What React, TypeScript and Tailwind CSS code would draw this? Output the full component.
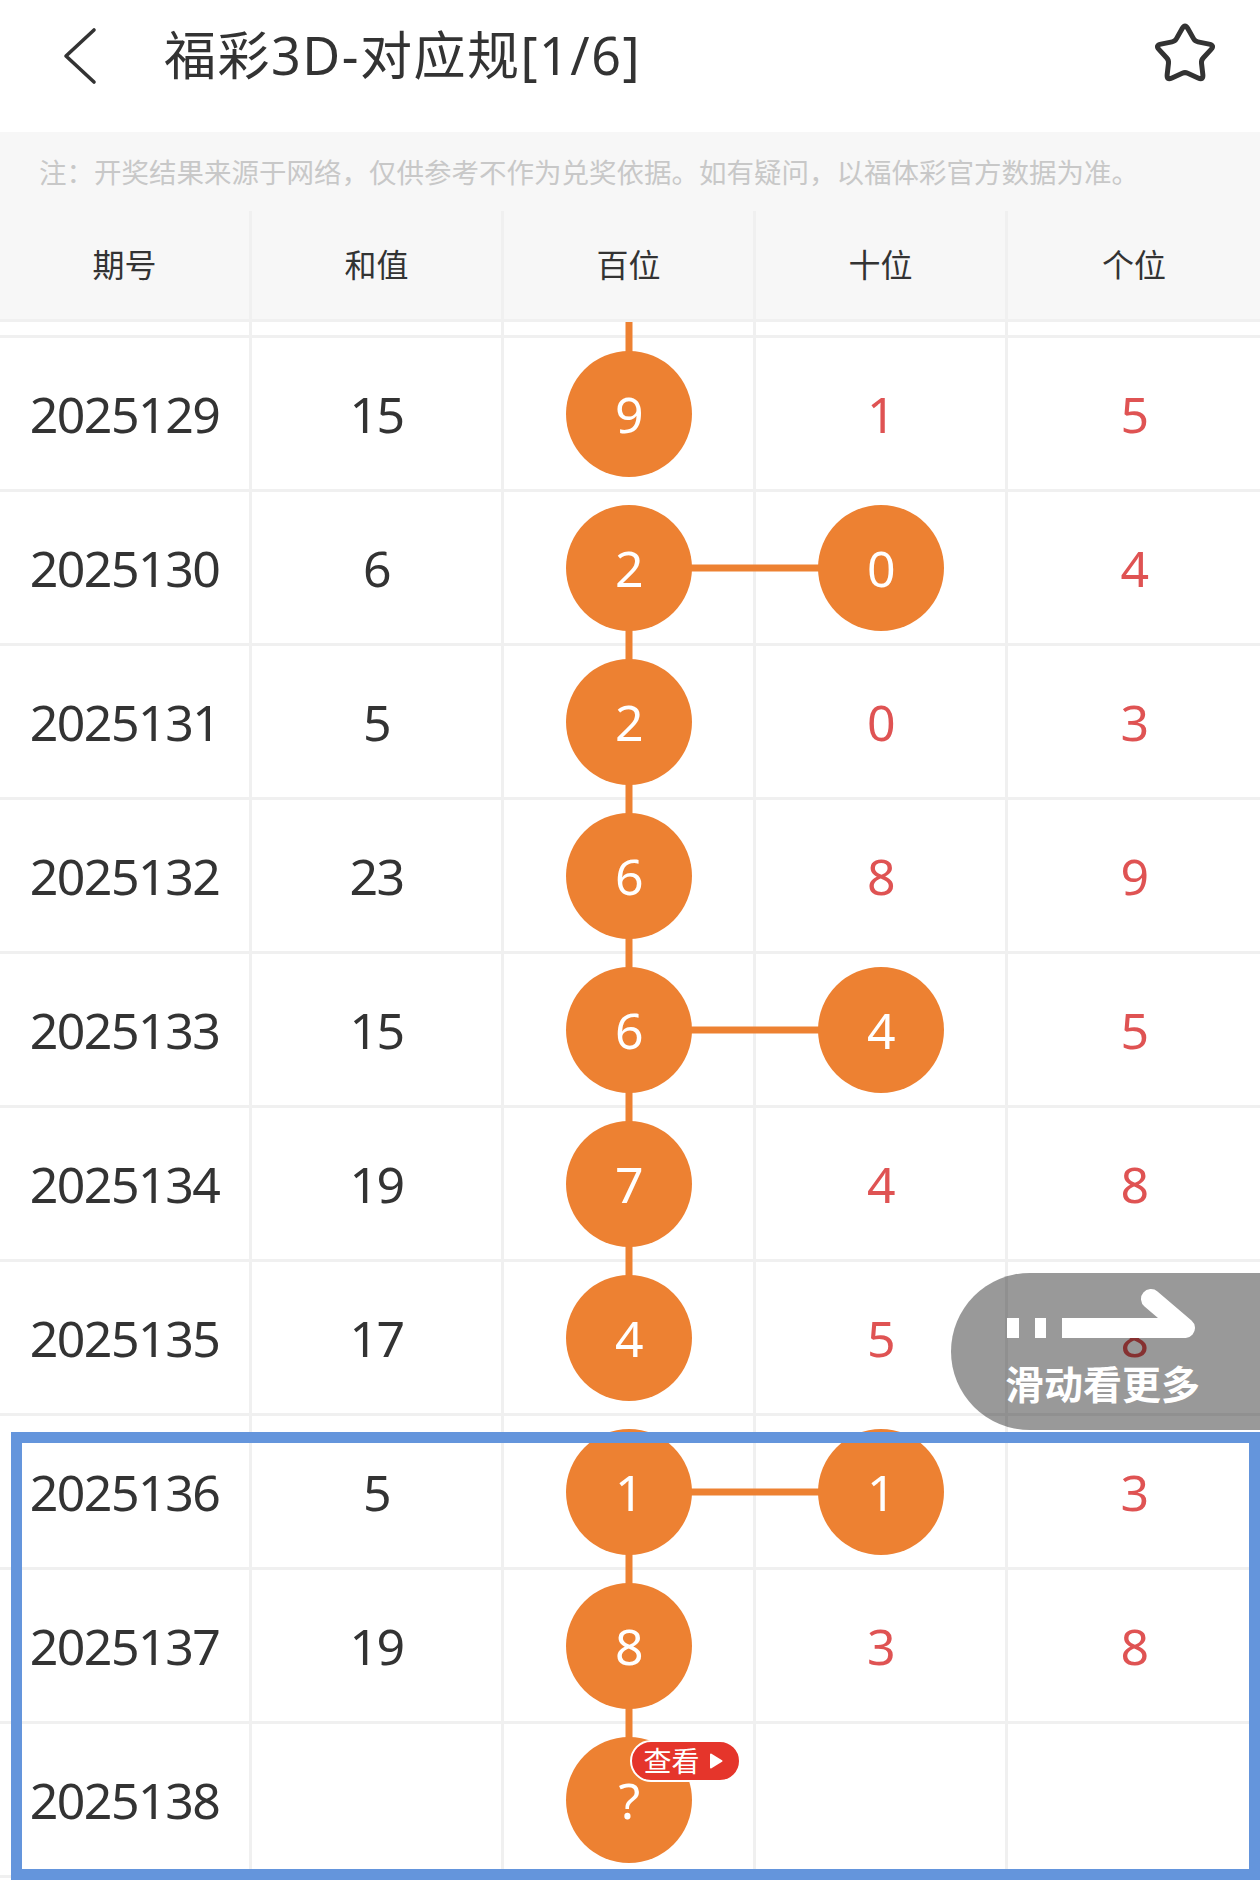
import React from "react";

type Row = {
  issue: string;
  sum: string;
  hundred: string;
  ten: string;
  unit: string;
  hit?: boolean;
};

const rows: Row[] = [
  { issue: "2025129", sum: "15", hundred: "9", ten: "1", unit: "5" },
  { issue: "2025130", sum: "6", hundred: "2", ten: "0", unit: "4", hit: true },
  { issue: "2025131", sum: "5", hundred: "2", ten: "0", unit: "3" },
  { issue: "2025132", sum: "23", hundred: "6", ten: "8", unit: "9" },
  { issue: "2025133", sum: "15", hundred: "6", ten: "4", unit: "5", hit: true },
  { issue: "2025134", sum: "19", hundred: "7", ten: "4", unit: "8" },
  { issue: "2025135", sum: "17", hundred: "4", ten: "5", unit: "8" },
  { issue: "2025136", sum: "5", hundred: "1", ten: "1", unit: "3", hit: true },
  { issue: "2025137", sum: "19", hundred: "8", ten: "3", unit: "8" },
  { issue: "2025138", sum: "", hundred: "?", ten: "", unit: "" },
];

// links[i] = vertical line in 百位 between row i and row i + 1
const links = [false, true, true, true, true, true, false, true, true];

const font = "font-['Noto_Sans','Noto_Sans_CJK_SC',sans-serif]";

function roundedStar(cx: number, cy: number, R: number, r: number, dOut: number, dIn: number) {
  const pts = Array.from({ length: 10 }, (_, i) => {
    const a = ((-90 + i * 36) * Math.PI) / 180;
    const rad = i % 2 === 0 ? R : r;
    return [cx + rad * Math.cos(a), cy + rad * Math.sin(a)];
  });
  let d = "";
  pts.forEach((p, i) => {
    const prev = pts[(i + 9) % 10];
    const next = pts[(i + 1) % 10];
    const k = i % 2 === 0 ? dOut : dIn;
    const toward = (q: number[]) => {
      const dx = q[0] - p[0];
      const dy = q[1] - p[1];
      const len = Math.hypot(dx, dy);
      return [p[0] + (dx / len) * k, p[1] + (dy / len) * k];
    };
    const a = toward(prev);
    const b = toward(next);
    d += `${i === 0 ? "M" : " L"}${a[0].toFixed(2)} ${a[1].toFixed(2)}`;
    d += ` Q${p[0].toFixed(2)} ${p[1].toFixed(2)} ${b[0].toFixed(2)} ${b[1].toFixed(2)}`;
  });
  return d + " Z";
}

const starD = roundedStar(36, 36, 31.5, 17, 6, 3);

function Ball({ value, badge }: { value: string; badge?: boolean }) {
  return (
    <div className="relative z-10 flex h-[126px] w-[126px] items-center justify-center rounded-full bg-[#ed8132] text-white">
      <span>{value}</span>
      {badge && (
        <div className="absolute left-[64px] top-[3px] flex h-[42px] w-[111px] items-center rounded-full border-2 border-white bg-[#e5352b] pl-[12px] text-[28px] leading-none tracking-normal text-white">
          <span>查看</span>
          <svg width="16" height="18" viewBox="0 0 16 18" className="ml-[8px]">
            <path d="M3 2.5 L13.5 9 L3 15.5 Z" fill="white" stroke="white" strokeWidth="2" strokeLinejoin="round" />
          </svg>
        </div>
      )}
    </div>
  );
}

function Cell({ children, last, className = "" }: { children?: React.ReactNode; last?: boolean; className?: string }) {
  return (
    <div
      className={`relative flex h-full w-[252px] shrink-0 items-center justify-center ${
        last ? "" : "border-r-[3px] border-[#f0f0f0]"
      } ${className}`}
    >
      {children}
    </div>
  );
}

export default function App() {
  return (
    <div className={`relative h-[1880px] w-[1260px] overflow-hidden bg-white text-[#333] ${font}`}>
      {/* Top bar */}
      <div className="flex h-[132px] items-start">
        <svg width="36" height="58" viewBox="0 0 36 58" className="ml-[62px] mt-[27px]">
          <polyline points="32,3 4,29 32,55" fill="none" stroke="#333" strokeWidth="3.6" strokeLinecap="round" strokeLinejoin="round" />
        </svg>
        <h1 className="ml-[66px] mt-[29px] text-[52px] leading-[52px] font-normal tracking-[1.5px]">福彩3D-对应规[1/6]</h1>
        <svg width="72" height="68" viewBox="0 0 72 68" className="ml-auto mr-[39px] mt-[19px]">
          <path d={starD} fill="none" stroke="#333" strokeWidth="5" strokeLinejoin="round" />
        </svg>
      </div>

      {/* Note */}
      <div className="flex h-[79px] items-center bg-[#f7f7f7] pl-[39px] pt-[3px] text-[27.5px] text-[#c8c8c8]">
        注：开奖结果来源于网络，仅供参考不作为兑奖依据。如有疑问，以福体彩官方数据为准。
      </div>

      {/* Table head */}
      <div className="flex h-[111px] border-b-[3px] border-[#f0f0f0] bg-[#f7f7f7] text-[32px]">
        {["期号", "和值", "百位", "十位", "个位"].map((h, i) => (
          <Cell key={h} last={i === 4} className="border-[#eeeeee]">
            {h}
          </Cell>
        ))}
      </div>

      {/* Scrolled-off row edge */}
      <div className="flex h-[16px] border-b-[3px] border-[#f0f0f0]">
        <Cell />
        <Cell />
        <Cell>
          <div className="absolute bottom-[-3px] left-1/2 top-0 w-[7px] -translate-x-1/2 bg-[#ed8132]" />
        </Cell>
        <Cell />
        <Cell last />
      </div>

      {/* Rows */}
      <div className="text-[50px] leading-none tracking-[-1.5px]">
        {rows.map((r, i) => {
          const up = i === 0 ? true : links[i - 1];
          const down = links[i] ?? false;
          return (
            <div key={r.issue} className="relative flex h-[154px] border-b-[3px] border-[#f0f0f0]">
              <Cell>{r.issue}</Cell>
              <Cell>{r.sum}</Cell>
              <Cell>
                {up && <div className="absolute left-1/2 top-0 h-1/2 w-[7px] -translate-x-1/2 bg-[#ed8132]" />}
                {down && <div className="absolute bottom-[-3px] left-1/2 top-1/2 w-[7px] -translate-x-1/2 bg-[#ed8132]" />}
                <Ball value={r.hundred} badge={r.hundred === "?"} />
              </Cell>
              <Cell>{r.hit ? <Ball value={r.ten} /> : <span className="text-[#df5353]">{r.ten}</span>}</Cell>
              <Cell last>
                <span className="text-[#df5353]">{r.unit}</span>
              </Cell>
              {r.hit && <div className="absolute left-[628px] top-1/2 z-[1] h-[7px] w-[252px] -translate-y-1/2 bg-[#ed8132]" />}
            </div>
          );
        })}
      </div>

      {/* Swipe hint */}
      <div className="absolute left-[951px] top-[1273px] z-20 flex h-[157px] w-[309px] flex-col rounded-l-full bg-black/40 pl-[54px] pt-[12px]">
        <svg width="200" height="56" viewBox="0 0 200 56">
          <rect x="2" y="33" width="12" height="20" fill="white" />
          <rect x="30" y="33" width="11" height="20" fill="white" />
          <rect x="57" y="33" width="123" height="20" fill="white" />
          <path d="M146 14 L180 43" stroke="white" strokeWidth="20" strokeLinecap="round" />
        </svg>
        <div className="mt-[23px] text-[39px] font-bold leading-none text-white">滑动看更多</div>
      </div>

      {/* Highlight frame */}
      <div className="absolute left-[11px] top-[1432px] z-20 h-[448px] w-[1249px] border-[11px] border-[#6495dc]" />
    </div>
  );
}
